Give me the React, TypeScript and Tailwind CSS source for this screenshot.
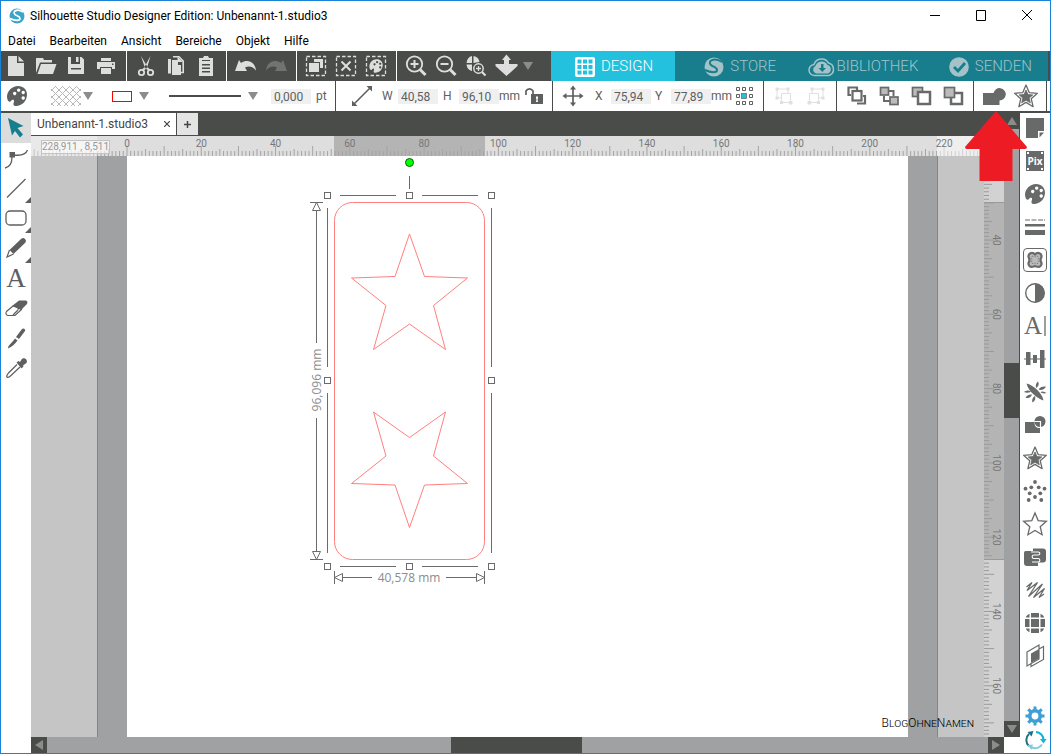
import React, { useState } from 'react'

const PX_PER_MM = 3.714
const PALETTE =
  'M2 13C2 7 7 2 13 2c5.5 0 9 4 9 8.5C22 17 17 22 11 22c-3.5 0-2.5-2.5-2-4.5.5-2.3-2-2.5-3-.5-.8 1.5-3.5 1.5-4-4zM8 9.5a1.7 1.7 0 1 0 0-.1zM12 6.2a1.7 1.7 0 1 0 0-.1zM16.5 8.5a1.7 1.7 0 1 0 0-.1zM16.5 14a1.7 1.7 0 1 0 0-.1z'
const STAR = 'M12 1l3.2 7.6 8.2.7-6.2 5.4 1.9 8L12 18.4 4.9 22.7l1.9-8L.6 9.3l8.2-.7z'
const STAR_SMALL = 'M12 6l2 4.5 4.8.4-3.6 3.2 1.1 4.7L12 16.3l-4.3 2.5 1.1-4.7-3.6-3.2 4.8-.4z'

function Icon({ children, className = '' }: { children: React.ReactNode; className?: string }) {
  return (
    <svg viewBox="0 0 24 24" className={`h-6 w-6 shrink-0 overflow-visible ${className}`} fill="currentColor" aria-hidden="true">
      {children}
    </svg>
  )
}

function Stroke({ d, w = 1.5 }: { d: string; w?: number }) {
  return <path d={d} fill="none" stroke="currentColor" strokeWidth={w} />
}

const dashedBox = <rect x="2.5" y="2.5" width="19" height="19" fill="none" stroke="currentColor" strokeWidth="1.3" strokeDasharray="3.5 2" />

const mainGroups: { label: string; icon: React.ReactNode; dim?: boolean }[][] = [
  [
    { label: 'Neu', icon: <path d="M4 2h9v7h7v13H4zM14.5 2L20 7.5h-5.5z" /> },
    { label: 'Öffnen', icon: <path d="M2 19V4h7l1 2h8v2.5H6zM7 10h15.5L19 20H3.5z" /> },
    { label: 'Speichern', icon: <path fillRule="evenodd" d="M4 3h3v7h9V3h1.5L20 5.5V20H4zM7 14h10v1.5H7zM12 3h2.5v5H12z" /> },
    { label: 'Drucken', icon: <path fillRule="evenodd" d="M7 4h10v3H7zM3 8h18v7h-3v-2H6v2H3zM7 14h10v6H7zM18 9.5h1.5V11H18z" /> },
  ],
  [
    {
      label: 'Ausschneiden',
      icon: (
        <>
          <path d="M7 2l6.5 11-2 2.5zM16.5 2l-6 11 2 2.5z" />
          <Stroke d="M11 14l-2.5 2.5M13 14l2.5 2.5" w={2} />
          <circle cx="7.5" cy="18.5" r="2.7" fill="none" stroke="currentColor" strokeWidth="1.8" />
          <circle cx="16.5" cy="18.5" r="2.7" fill="none" stroke="currentColor" strokeWidth="1.8" />
        </>
      ),
    },
    {
      label: 'Kopieren',
      icon: (
        <>
          <path d="M4 5h3v14.5H4zM8 6h6v5h3v10H8z" />
          <path fill="#4a4c4a" d="M7 5h1v14.5H7z" />
          <Stroke d="M9 2.8h6L19.2 7v11.5H17" w={1.6} />
          <path d="M13.5 2.5L19 8h-5.5z" />
        </>
      ),
    },
    { label: 'Einfügen', icon: <path fillRule="evenodd" d="M5 4h4l1-2h4l1 2h4v18H5zM8 6v1h8V6zM8 10v1.5h8V10zM8 13.5V15h8v-1.5zM8 17v1.5h8V17z" /> },
  ],
  [
    { label: 'Rückgängig', icon: <path d="M1 17L5 6l2 3c7-4.5 14-1 15 7.5-3-4-7-5-11-3l2 3.5z" /> },
    { label: 'Wiederholen', dim: true, icon: <path d="M23 17L19 6l-2 3C10 4.5 3 8 2 16.5c3-4 7-5 11-3L11 17z" /> },
  ],
  [
    {
      label: 'Alles auswählen',
      icon: (
        <>
          {dashedBox}
          <path d="M10 5h9v9h-3V8h-6zM5 9h10v9H5z" />
        </>
      ),
    },
    {
      label: 'Auswahl aufheben',
      icon: (
        <>
          {dashedBox}
          <Stroke d="M7.5 7.5l9 9M16.5 7.5l-9 9" w={2} />
        </>
      ),
    },
    {
      label: 'Nach Farbe auswählen',
      icon: (
        <>
          {dashedBox}
          <path fillRule="evenodd" transform="translate(4 4) scale(.67)" d={PALETTE} />
        </>
      ),
    },
  ],
  [
    {
      label: 'Vergrößern',
      icon: (
        <>
          <circle cx="10.5" cy="10" r="7.7" fill="none" stroke="currentColor" strokeWidth="1.8" />
          <Stroke d="M6.5 10h8M10.5 6v8" w={2} />
          <Stroke d="M16 15.5l5.5 5.5" w={3} />
        </>
      ),
    },
    {
      label: 'Verkleinern',
      icon: (
        <>
          <circle cx="10.5" cy="10" r="7.7" fill="none" stroke="currentColor" strokeWidth="1.8" />
          <Stroke d="M6.5 10h8" w={2} />
          <Stroke d="M16 15.5l5.5 5.5" w={3} />
        </>
      ),
    },
    {
      label: 'Auswahl zoomen',
      icon: (
        <>
          <path d="M8 2v7H2.5C3 5 5 2.5 8 2zM9.5 2c3.5.5 5.5 3 6 6l-6 1zM2.5 10.5H8V17c-3-.5-5-2.5-5.5-6.5z" />
          <circle cx="14.5" cy="14.5" r="4.7" fill="none" stroke="currentColor" strokeWidth="1.5" />
          <Stroke d="M12 14.5h5M14.5 12v5" w={1.3} />
          <Stroke d="M18 18l3.5 3.5" w={2.2} />
        </>
      ),
    },
    { label: 'Verschieben', icon: <path d="M12.5.5L17 6h-2v4h8.500v2L12.5 22 1.500 12v-2H10V6H8z" /> },
  ],
]

const tabs = [
  {
    name: 'DESIGN',
    pad: 'pl-6 gap-1.5',
    icon: (
      <svg viewBox="0 0 20 20" className="h-5 w-5">
        <rect width="20" height="20" rx="2" fill="#fff" />
        <path fill="#24c1df" d="M2.5 2.5h4v4h-4zM8 2.5h4v4H8zM13.5 2.5h4v4h-4zM2.5 8h4v4h-4zM8 8h4v4H8zM13.5 8h4v4h-4zM2.5 13.5h4v4h-4zM8 13.5h4v4H8zM13.5 13.5h4v4h-4z" />
      </svg>
    ),
  },
  {
    name: 'STORE',
    pad: 'pl-[29px] gap-1.5',
    icon: (
      <svg viewBox="0 0 20 20" className="h-5 w-5">
        <circle cx="10" cy="10" r="9.5" fill="#a3c3c8" />
        <path d="M18 5C10 0 3 4 7 8c2 2 6 2 6 5 0 3-6 3-12 0" fill="none" stroke="#187e8d" strokeWidth="2" />
      </svg>
    ),
  },
  {
    name: 'BIBLIOTHEK',
    pad: 'pl-2 gap-px',
    icon: (
      <svg viewBox="0 0 28 20" className="h-5 w-7">
        <path d="M7 18.5a5.5 5.5 0 0 1-1-11A8 8 0 0 1 20.5 6 6.5 6.5 0 0 1 21 18.5z" fill="#187e8d" stroke="#a3c3c8" strokeWidth="1.5" />
        <path d="M8 16.5a4 4 0 0 1-.5-7.5A6.5 6.5 0 0 1 19.5 8a4.5 4.5 0 0 1 .5 8.5z" fill="#a3c3c8" />
        <path d="M13 7h2.5v4H18l-3.7 4-3.8-4H13z" fill="#187e8d" />
      </svg>
    ),
  },
  {
    name: 'SENDEN',
    pad: 'pl-[25px] gap-1.5',
    icon: (
      <svg viewBox="0 0 20 20" className="h-5 w-5">
        <circle cx="10" cy="10" r="9.8" fill="#a3c3c8" />
        <path d="M5 10l4 4 7-8" fill="none" stroke="#187e8d" strokeWidth="2.8" />
      </svg>
    ),
  },
]

const groupIcon = (
  <Icon className="text-[#e0e0e0]">
    <Stroke d="M5 5h11v4M5 5v9h4M9.5 9.5h9v9h-9z" w={1} />
    <path d="M3.5 3.5h3v3h-3zM14.5 3.5h3v3h-3zM3.5 12.5h3v3h-3zM17 17h3.5v3.5H17zM8 17h3v3H8z" />
  </Icon>
)

const arrangeIcons = [
  {
    label: 'Nach vorne bringen',
    icon: (
      <>
        <Stroke d="M12 6V3.5H3.5V11H6M12 19.5h8V12h-2" w={2.2} />
        <rect x="7.5" y="7" width="9" height="9.5" fill="#fff" stroke="currentColor" strokeWidth="2.2" />
      </>
    ),
  },
  {
    label: 'Nach hinten stellen',
    icon: (
      <>
        <Stroke d="M7 12v5h6M12 7h4.5v5" w={2} />
        <rect x="3.5" y="3.5" width="8" height="7.5" fill="#bbb" stroke="currentColor" strokeWidth="1.7" />
        <rect x="13" y="13" width="8" height="7.5" fill="#bbb" stroke="currentColor" strokeWidth="1.7" />
      </>
    ),
  },
  {
    label: 'Einen Schritt nach vorne',
    icon: (
      <>
        <rect x="3.5" y="3.5" width="10" height="9" fill="#bbb" stroke="currentColor" strokeWidth="1.7" />
        <rect x="9" y="8" width="12" height="12" fill="#fff" stroke="currentColor" strokeWidth="2.5" />
      </>
    ),
  },
  {
    label: 'Einen Schritt nach hinten',
    icon: (
      <>
        <rect x="10" y="9" width="11" height="11" fill="#fff" stroke="currentColor" strokeWidth="2.5" />
        <rect x="3.5" y="3.5" width="10" height="10" fill="#bbb" stroke="currentColor" strokeWidth="1.7" />
      </>
    ),
  },
]

const tools: { label: string; flyout?: boolean; icon: React.ReactNode }[] = [
  { label: 'Auswählen', icon: <path fill="#177e8d" d="M4 2l15.5 8-6 2 5.5 6.5-3 3-5-6.5-3 4.5z" /> },
  {
    label: 'Punkte bearbeiten',
    icon: (
      <>
        <path d="M5.5 6H11v5.5H5.5z" />
        <Stroke d="M10 9c8 1 12-1 13.5-5M8 11c0 6-2 10-7 11" w={1.3} />
      </>
    ),
  },
  { label: 'Linie', flyout: true, icon: <Stroke d="M3 21.5L21.5 3" w={1.3} /> },
  { label: 'Rechteck', flyout: true, icon: <rect x="2" y="5" width="20" height="14" rx="4" fill="none" stroke="currentColor" strokeWidth="1.3" /> },
  {
    label: 'Freihand',
    flyout: true,
    icon: (
      <>
        <path d="M5.5 14L17 3c1.5-1.5 3-1.500 4 0 1 1 1.500 2.500 0 4L9.500 18z" />
        <Stroke d="M5.5 14L3 21l6.500-3" w={1.2} />
      </>
    ),
  },
  { label: 'Text', icon: <text x="12" y="21" textAnchor="middle" fontSize="27" fontFamily="Liberation Serif, serif">A</text> },
  {
    label: 'Radierer',
    icon: (
      <>
        <path d="M8 10l7-5.500h6c2.500 0 3 2 1.500 4L17 14z" />
        <Stroke d="M9 10l-6.5 5.5c-1.5 2 0 4 2 4H11L18 13M8.5 10h3c3 0 4 2 2 4.5L9 19" w={1.2} />
      </>
    ),
  },
  { label: 'Messer', icon: <path d="M12 11l6-8c1-1.5 4 0 3 2l-6 8zM11 12.5l2.5 2C11 18 8 21 4 22.5 4 19 8 17 11 12.5z" /> },
  {
    label: 'Pipette',
    icon: (
      <>
        <path d="M12.5 6.5l2-1.5 1.5 1 1.5-2.5c2-3 7 0 5 3.5L19 9.5l.5 1-2 2z" />
        <Stroke d="M13 8.5L4.5 17c-1 1.5-2.5 3-1.5 4s3-.5 4-1.5l9-8.5" w={1.2} />
      </>
    ),
  },
]

const dots = [[12, 3], [8.3, 8.3], [15.7, 8.3], [2.5, 9.7], [21.5, 9.7], [6.7, 14.3], [17.3, 14.3], [12, 18], [5.7, 21], [18.3, 21]]

const panels: { label: string; active?: boolean; icon: React.ReactNode }[] = [
  { label: 'Seite einrichten', icon: <path d="M3 2h18v13h-6v7H3zM16.5 16.5H21l-4.500 5z" /> },
  {
    label: 'PixScan',
    icon: (
      <>
        <rect x="3" y="2" width="18" height="20" />
        <path fill="#fff" d="M4 3h2v2H4zM18 3h2v2h-2zM4 19h2v2H4zM18 19h2v2h-2z" />
        <text x="12" y="16" textAnchor="middle" fontSize="10" fontWeight="700" fill="#fff" fontFamily="Open Sans, sans-serif">Pix</text>
      </>
    ),
  },
  { label: 'Füllung', icon: <path fillRule="evenodd" d={PALETTE} /> },
  {
    label: 'Linienstil',
    icon: <path d="M2 4.5h5v1H2zM8.5 4.5h5v1h-5zM15 4.5h5v1h-5zM21 4.5h1v1h-1zM2 9h20v2.5H2zM2 15h20v5H2z" />,
  },
  {
    label: 'Nachzeichnen',
    active: true,
    icon: (
      <>
        <path d="M6 3c2.5-1 4.5 0 6 1.5C13.5 3 15.5 2 18 3c3 1.500 3.5 4.5 1.500 7.5v3c2 3 1.5 6-1.500 7.5-2.5.5-4.500-.5-6-1-1.500.5-3.500 1.500-6 1-3-1.500-3.500-4.500-1.500-7.500v-3C2.500 7.500 3 4.500 6 3z" fill="#bbb" stroke="currentColor" strokeWidth="3" />
        <path d="M8 7c2-.5 3 1 4 1s2-1.500 4-1c1.500 1.500 0 3.500 0 5s1.500 3 0 4.500c-2 .5-3-.5-4-.5s-2 1-4 .5c-1.500-1.500 0-3 0-4.500s-1.500-3.500 0-5z" fill="none" stroke="currentColor" strokeDasharray="2 1.5" />
      </>
    ),
  },
  {
    label: 'Kontrast',
    icon: (
      <>
        <circle cx="12" cy="12" r="9.3" fill="none" stroke="currentColor" strokeWidth="1.4" />
        <path d="M12 2.5a9.5 9.5 0 0 1 0 19z" />
      </>
    ),
  },
  {
    label: 'Textstil',
    icon: (
      <>
        <text x="10" y="20" textAnchor="middle" fontSize="25" fontFamily="Liberation Serif, serif">A</text>
        <Stroke d="M22 2v20" w={1.3} />
      </>
    ),
  },
  { label: 'Ausrichten', icon: <path d="M1 11.5h22v1H1zM3 5h4.5v13H3zM10 8h4v8h-4zM17 3h4.5v18H17z" /> },
  {
    label: 'Replizieren',
    icon: (
      <>
        <path d="M3.5 3.5C10 5 19.5 13 20.500 20.500 14 18.500 5 11 3.500 3.500z" />
        <path d="M13 8c-.5-3 0-5 2-6.500 1.500 2.500.5 5-2 6.500zM15.500 9.500c1.500-2.500 4-3.500 7.500-3-1.500 3-4 4-7.500 3zM17.500 12c2-1 4-.5 6 1-2.500.8-4.500.5-6-1zM1 12c2.500-2 5-2 7-.5-2 1.500-4.500 1.800-7 .5zM2.500 18c1-2.500 3.500-4 6.500-3.500-1 3-3.500 4-6.500 3.500zM9.500 22.500c-1-2.500 0-5 2.500-6.500 1 2.500 0 5-2.500 6.500z" />
      </>
    ),
  },
  {
    label: 'Ändern',
    icon: (
      <>
        <circle cx="17" cy="8.5" r="5.5" />
        <path d="M2 9h9.500c0 4 1.500 6 5.500 6v5H2z" />
        <path d="M11.5 8.5h6V15" fill="none" stroke="#fff" strokeWidth="1.2" />
      </>
    ),
  },
  {
    label: 'Versatz',
    icon: (
      <>
        <path d={STAR} fill="none" stroke="currentColor" strokeWidth="1.3" strokeLinejoin="round" />
        <path d={STAR_SMALL} stroke="currentColor" strokeWidth=".8" />
      </>
    ),
  },
  { label: 'Strasssteine', icon: dots.map(([cx, cy]) => <circle key={`${cx}-${cy}`} cx={cx} cy={cy} r="1.9" />) },
  { label: 'Skizze', icon: <path d={STAR} fill="none" stroke="currentColor" strokeWidth="1.3" /> },
  {
    label: 'Puzzle',
    icon: (
      <>
        <path d="M3 6h7V3.5h10c2 0 3 1 3 3v8c0 2-1 3-3 3h-5V21H4c-2 0-3-1-3-3V9c0-2 0-3 2-3z" />
        <path d="M8 7h7c2.5 0 2.5 3 0 3h-4c-2.5 0-2.5 3.5 0 3.5h4c2.500 0 2.500 3.500 0 3.500H9" fill="none" stroke="#fff" strokeWidth="1.1" />
      </>
    ),
  },
  { label: 'Füllmuster', icon: <Stroke d="M3.500 9L9 4.500 4 12.500 14.500 4.500 5.500 18.500 19.500 6 10.500 19.500 21.500 10.500 16 19.500 21 16" w={1.3} /> },
  {
    label: 'Medienanordnung',
    icon: (
      <path d="M8 2h8v4.5H8zM8 17.5h8V22H8zM2 8h4.5v8H2zM17.5 8H22v8h-4.5zM8 8h8v8H8zM6.5 2.8v3.7H2.8c.5-1.5 2-3 3.7-3.7zM17.5 2.8v3.7h3.7c-.5-1.5-2-3-3.7-3.7zM6.5 21.2v-3.7H2.8c.5 1.5 2 3 3.7 3.7zM17.5 21.2v-3.7h3.7c-.5 1.5-2 3-3.7 3.7z" />
    ),
  },
  {
    label: 'Warp',
    icon: (
      <>
        <path d="M8 9.500L16 5v9.500L8 19z" />
        <Stroke d="M4 8L16 1v14L4 22zM16 5l4.500-2.500v13L8 22.500V19" w={1.2} />
      </>
    ),
  },
]

function Separator() {
  return <span className="h-full w-px shrink-0 bg-[#4a4c4a]" />
}

function Caret({ className = '' }: { className?: string }) {
  return (
    <svg viewBox="0 0 10 8" className={`h-2 w-2.5 shrink-0 ${className}`} fill="#8b8d8b" aria-hidden="true">
      <path d="M0 0h10L5 8z" />
    </svg>
  )
}

function Measure({ id, label, value }: { id: string; label: string; value: string }) {
  return (
    <>
      <label htmlFor={id} className="w-4 shrink-0">{label}</label>
      <input id={id} defaultValue={value} className="mt-px h-[15px] w-10 shrink-0 bg-[#f0f0f0] pl-[3px] outline-none" />
    </>
  )
}

function TopRuler() {
  const ticks = Array.from({ length: 300 }, (_, i) => i - 25)
  return (
    <svg className="h-5 w-full bg-[#dedede]" aria-hidden="true">
      <rect x="303" width="151" height="20" fill="#b4b4b4" />
      {ticks.map(mm => {
        const x = 96 + mm * PX_PER_MM
        const len = mm % 10 === 0 ? 10 : mm % 5 === 0 ? 7 : 5
        return <path key={mm} d={`M${x} 20v-${len}`} stroke="#a4a4a4" />
      })}
      <rect width="66" height="20" fill="#fff" opacity=".35" />
      <rect x="906" width="100%" height="20" fill="#fff" opacity=".5" />
      {ticks.filter(mm => mm % 20 === 0 && mm >= 0 && mm < 230).map(mm => (
        <text key={mm} x={96 + mm * PX_PER_MM} y="11" textAnchor="middle" fontSize="10" fill="#777">{mm}</text>
      ))}
    </svg>
  )
}

function SideRuler() {
  const ticks = Array.from({ length: 300 }, (_, i) => i + 18)
  return (
    <svg className="h-full w-5 shrink-0 bg-[#d2d2d2]" aria-hidden="true">
      <rect y="46" width="20" height="357" fill="#b4b4b4" />
      <path d="M0 46.5h20M0 403.5h20" stroke="#9a9a9a" />
      {ticks.map(mm => {
        const y = mm * PX_PER_MM - 64.5
        const len = mm % 10 === 0 ? 10 : mm % 5 === 0 ? 8 : 5
        return <path key={mm} d={`M0 ${y}h${len}`} stroke="#9a9a9a" />
      })}
      {ticks.filter(mm => mm % 20 === 0 && mm > 20 && mm < 170).map(mm => (
        <text key={mm} transform={`translate(9 ${mm * PX_PER_MM - 64.5}) rotate(90)`} textAnchor="middle" fontSize="10" fill="#777">{mm}</text>
      ))}
    </svg>
  )
}

function Artwork() {
  const star = 'M378.5 78L393.5 120.5 436.5 122 402.5 149.5 414.5 193.5 378.5 168 342.5 193.5 355 149.5 320.5 122 364 120.5z'
  return (
    <svg className="absolute inset-0 h-full w-full" fill="none" aria-label="Zeichenfläche">
      <g stroke="#ff7f7f">
        <rect x="303.5" y="46.5" width="150" height="357" rx="18" />
        <path d={star} />
        <path d={star} transform="translate(0 449.5) scale(1 -1)" />
      </g>
      <g stroke="#6b6b6b">
        <path d="M378.5 20v13M309 39.5h56M391 39.5h56M309 410.5h56M391 410.5h56" />
        <path d="M296.5 52v159M296.5 237v160M460.5 52v159M460.5 237v160" />
        {[296, 378, 460].flatMap(x => [39, 224, 410].map(y => (x === 378 && y === 224 ? null : <rect key={`${x}-${y}`} x={x - 2.5} y={y - 2.5} width="6" height="6" fill="#fff" />)))}
        <path d="M279 46.5h13M279 403.5h13M285.5 54v133M285.5 262v134M281.5 54.5l4-8 4 8zM281.5 395.5l4 8 4-8z" />
        <path d="M303.5 415v13M453.5 415v13M311 421.5h30M415 421.5h31M311.5 417.5l-8 4 8 4zM445.5 417.5l8 4-8 4z" />
      </g>
      <circle cx="378.5" cy="6.5" r="4" fill="#0f0" stroke="#060" />
      <g fill="#8c8c8c" fontSize="12" textAnchor="middle" className="font-['Open_Sans','Noto_Sans',sans-serif]">
        <text x="378" y="426">40,578 mm</text>
        <text transform="translate(290 224) rotate(-90)">96,096 mm</text>
      </g>
    </svg>
  )
}

export default function App() {
  const [activeTab, setActiveTab] = useState('DESIGN')
  const [activeTool, setActiveTool] = useState('Auswählen')

  return (
    <div className="relative flex h-screen min-h-0 flex-col overflow-hidden border border-[#1883d7] bg-white font-['Roboto','Noto_Sans',sans-serif] text-xs text-black">
      {/* Title bar */}
      <header className="flex h-[30px] shrink-0 items-center pl-2">
        <svg viewBox="0 0 16 16" className="mr-[5px] h-4 w-4" aria-hidden="true">
          <circle cx="8" cy="8" r="7.5" fill="#3aa5c9" />
          <path d="M14 4C8 0 3 3.5 6 6.5c1.5 1.5 5 1.5 5 4s-5 2.5-10 0" fill="none" stroke="#fff" strokeWidth="1.7" />
        </svg>
        <h1>Silhouette Studio Designer Edition: Unbenannt-1.studio3</h1>
        <div className="ml-auto flex">
          {[
            { label: 'Minimieren', d: 'M1 5.5h10' },
            { label: 'Maximieren', d: 'M1.5.5h9v10h-9z' },
            { label: 'Schließen', d: 'M1 0l10 10M11 0L1 10' },
          ].map(b => (
            <button key={b.label} aria-label={b.label} className="flex h-[30px] w-[46px] items-center justify-center">
              <svg viewBox="0 0 12 12" className="h-3 w-3" fill="none" stroke="#000"><path d={b.d} /></svg>
            </button>
          ))}
        </div>
      </header>

      <nav className="flex h-5 shrink-0 items-center gap-3.5 pl-[7px]">
        {['Datei', 'Bearbeiten', 'Ansicht', 'Bereiche', 'Objekt', 'Hilfe'].map(m => (
          <button key={m}>{m}</button>
        ))}
      </nav>

      {/* Main toolbar */}
      <div className="flex h-[30px] shrink-0 bg-[#4a4c4a] pr-0.5 text-[#dedede]">
        {mainGroups.map((group, i) => (
          <div key={i} className={`flex shrink-0 ${i === 0 ? 'pr-[5px]' : i === 4 ? 'border-l border-white pl-1' : 'border-l border-white pl-1 pr-[5px]'}`}>
            {group.map(b => (
              <button key={b.label} aria-label={b.label} disabled={b.dim} className={`flex h-[30px] w-[30px] items-center justify-center ${b.dim ? 'text-[#717371]' : ''}`}>
                <Icon>{b.icon}</Icon>
              </button>
            ))}
            {i === 4 && <button aria-label="Weitere Ansichten" className="w-[30px] pl-0.5"><Caret /></button>}
          </div>
        ))}
        <div className="grid min-w-0 flex-1 grid-cols-4">
          {tabs.map(tab => (
            <button
              key={tab.name}
              onClick={() => setActiveTab(tab.name)}
              className={`flex min-w-0 items-center pt-0.5 text-[15px] font-light ${tab.pad} ${activeTab === tab.name ? 'bg-[#24c1df] text-white' : 'bg-[#187e8d] text-[#a3c3c8]'}`}
            >
              <span className="shrink-0">{tab.icon}</span>
              {tab.name}
            </button>
          ))}
        </div>
      </div>

      {/* Property toolbar */}
      <div className="flex h-[30px] shrink-0 items-center text-[#5e6060]">
        <div className="flex h-full w-[334px] shrink-0 items-center pl-1">
          <button aria-label="Farben"><Icon><path fillRule="evenodd" d={PALETTE} /></Icon></button>
          <button aria-label="Füllfarbe" className="ml-[22px] flex items-center gap-0.5">
            <svg viewBox="0 0 30 20" className="h-5 w-[30px]" fill="none" stroke="#b8b8b8">
              <path d="M0 5l5-5M0 12L12 0M0 19L19 0M6 20L26 0M13 20L30 3M20 20l10-10M27 20l3-3M25 0l5 5M18 0l12 12M11 0l19 19M4 0l20 20M0 3l17 17M0 10l10 10M0 17l3 3" />
            </svg>
            <Caret />
          </button>
          <button aria-label="Linienfarbe" className="ml-[19px] flex items-center gap-[7px]">
            <span className="h-[11px] w-5 border border-[#f00]" />
            <Caret />
          </button>
          <button aria-label="Linienart" className="ml-5 flex items-center gap-[7px]">
            <span className="h-0.5 w-[72px] bg-[#4a4c4a]" />
            <Caret />
          </button>
          <input aria-label="Linienstärke" defaultValue="0,000" className="ml-[13px] mt-px h-[15px] w-10 bg-[#f0f0f0] pl-[3px] outline-none" />
          <span className="ml-[5px]">pt</span>
        </div>
        <Separator />
        <div className="flex h-full w-[216px] shrink-0 items-center pl-3.5">
          <Icon className="mr-2"><Stroke d="M4 20L20 4" w={1.6} /><path d="M22 2v5.5L16.5 2zM2 22v-5.5L7.5 22z" /></Icon>
          <Measure id="width" label="W" value="40,58" />
          <span className="w-[5px]" />
          <Measure id="height" label="H" value="96,10" />
          <span className="w-6">mm</span>
          <button aria-label="Seitenverhältnis sperren">
            <Icon>
              <Stroke d="M3 11V7a4 4 0 0 1 7 0v3" w={1.7} />
              <path fillRule="evenodd" d="M8 10h12v10H8zM13 12.5v2l.5.5-.5 3h2l-.5-3 .5-.5v-2z" />
            </Icon>
          </button>
        </div>
        <Separator />
        <div className="flex h-full w-[210px] shrink-0 items-center pl-2">
          <Icon className="mr-2.5"><Stroke d="M12 4v16M4 12h16" w={1.7} /><path d="M12 1.5l3 4H9zM12 22.5l3-4H9zM1.5 12l4-3v6zM22.5 12l-4-3v6z" /></Icon>
          <Measure id="pos-x" label="X" value="75,94" />
          <span className="w-1" />
          <Measure id="pos-y" label="Y" value="77,89" />
          <span className="w-[21px]">mm</span>
          <button aria-label="Bezugspunkt">
            <Icon>
              <path d="M4.5 3.5h3v3h-3zM10.5 3.5h3v3h-3zM17.5 3.5h3v3h-3zM4.5 10.5h3v3h-3zM17.5 10.5h3v3h-3zM4.5 17.5h3v3h-3zM10.5 17.5h3v3h-3zM17.5 17.5h3v3h-3z" fill="none" stroke="currentColor" />
              <rect x="9.5" y="9.5" width="5" height="5" fill="#24c1df" stroke="currentColor" strokeWidth=".7" />
            </Icon>
          </button>
        </div>
        <Separator />
        <div className="flex h-full w-[72px] shrink-0 items-center gap-2 pl-2">
          <button aria-label="Gruppieren" disabled>{groupIcon}</button>
          <button aria-label="Gruppierung aufheben" disabled className="-scale-x-100">{groupIcon}</button>
        </div>
        <Separator />
        <div className="flex h-full w-[136px] shrink-0 items-center gap-2 pl-2 text-[#686a6a]">
          {arrangeIcons.map(b => (
            <button key={b.label} aria-label={b.label}><Icon>{b.icon}</Icon></button>
          ))}
        </div>
        <Separator />
        <div className="flex h-full w-[72px] shrink-0 items-center gap-2 pl-2 text-[#686a6a]">
          <button aria-label="Verschweißen"><Icon><path d="M1 9h10.5a6.2 6.2 0 1 1 6 7.5V21H1z" /></Icon></button>
          <button aria-label="Versatz">
            <Icon>
              <path d={STAR} fill="none" stroke="currentColor" strokeWidth="1.3" strokeLinejoin="round" />
              <path d={STAR_SMALL} stroke="currentColor" strokeWidth=".8" />
            </Icon>
          </button>
        </div>
        <Separator />
      </div>
      <div className="h-0.5 shrink-0 bg-[#4a4c4a]" />

      <main className="flex min-h-0 flex-1">
        {/* Drawing tools */}
        <aside className="flex w-[30px] shrink-0 flex-col text-[#5e6060]">
          {tools.map(t => (
            <button
              key={t.label}
              aria-label={t.label}
              onClick={() => setActiveTool(t.label)}
              className={`relative flex h-[30px] items-center justify-center ${activeTool === t.label ? 'bg-[#dcdcdc]' : ''}`}
            >
              <Icon>{t.icon}</Icon>
              {t.flyout && (
                <svg viewBox="0 0 6 6" className="absolute bottom-0 right-0 h-1.5 w-1.5" fill="currentColor"><path d="M6 0v6H0z" /></svg>
              )}
            </button>
          ))}
        </aside>

        {/* Document */}
        <section className="flex min-w-0 flex-1 flex-col">
          <div className="flex min-h-0 flex-1">
            <div className="flex min-w-0 flex-1 flex-col">
              <div className="flex h-[23px] shrink-0 gap-px bg-[#4a4c4a] pb-px text-[#444]">
                <div className="flex w-[145px] items-center justify-between bg-white px-1.5">
                  <span>Unbenannt-1.studio3</span>
                  <button aria-label="Tab schließen">
                    <svg viewBox="0 0 6 6" className="h-1.5 w-1.5" stroke="#444" strokeWidth="1.2"><path d="M0 0l6 6M6 0L0 6" /></svg>
                  </button>
                </div>
                <button aria-label="Neuer Tab" className="flex w-[21px] items-center justify-center bg-[#e4e4e4]">
                  <svg viewBox="0 0 7 7" className="h-[7px] w-[7px]" stroke="#444" strokeWidth="1.5"><path d="M0 3.5h7M3.5 0v7" /></svg>
                </button>
              </div>
              <div className="relative h-5 shrink-0">
                <TopRuler />
                <div className="absolute left-2.5 top-1 flex h-3.5 w-[69px] items-center justify-center whitespace-nowrap border border-[#c4c4c4] bg-white/60 text-[10px] text-[#999]">
                  228,911 , 8,511
                </div>
              </div>
              <div className="flex min-h-0 flex-1">
                <div className="relative flex min-w-0 flex-1 bg-[#c5c5c5]">
                  <div className="w-[66px] shrink-0" />
                  <div className="min-w-0 flex-1 border-x border-[#848587] bg-[#9fa1a3] px-[29px]">
                    <div className="h-full bg-white" />
                  </div>
                  <div className="w-[46px] shrink-0" />
                  <Artwork />
                  <span className="absolute bottom-1.5 right-2.5 text-xs font-light text-black [font-variant:small-caps]">BlogOhneNamen</span>
                </div>
                <SideRuler />
              </div>
            </div>

            {/* Vertical scrollbar */}
            <div className="flex w-4 shrink-0 flex-col border-r border-[#4a4c4a] bg-[#9fa1a3]">
              <button aria-label="Nach oben" className="flex h-4 items-center justify-center bg-[#4a4c4a]"><Caret className="rotate-180" /></button>
              <div className="h-[234px] shrink-0" />
              <div className="h-[55px] shrink-0 bg-[#4a4c4a]" />
              <button aria-label="Nach unten" className="mt-auto flex h-4 items-center justify-center bg-[#4a4c4a]"><Caret /></button>
            </div>
          </div>

          {/* Horizontal scrollbar */}
          <div className="mr-4 flex h-4 shrink-0 bg-[#9fa1a3]">
            <button aria-label="Nach links" className="flex w-4 items-center justify-center bg-[#4a4c4a]"><Caret className="rotate-90" /></button>
            <div className="w-[404px] shrink-0" />
            <div className="w-[131px] shrink-0 bg-[#4a4c4a]" />
            <button aria-label="Nach rechts" className="ml-auto flex w-4 items-center justify-center bg-[#4a4c4a]"><Caret className="-rotate-90" /></button>
          </div>
        </section>

        {/* Panel shortcuts */}
        <aside className="flex w-[30px] shrink-0 flex-col items-center gap-[3px] text-[#686a6a]">
          {panels.map(p => (
            <button key={p.label} aria-label={p.label} className="flex h-[30px] w-[30px] items-center justify-center">
              {p.active ? (
                <span className="flex h-6 w-6 items-center justify-center rounded border border-[#686a6a]">
                  <svg viewBox="0 0 24 24" className="h-[18px] w-[18px]" fill="currentColor">{p.icon}</svg>
                </span>
              ) : (
                <Icon>{p.icon}</Icon>
              )}
            </button>
          ))}
          <div className="mt-auto flex flex-col pb-px">
            <button aria-label="Einstellungen">
              <Icon className="text-[#3d9fd3]">
                <circle cx="12" cy="12" r="5.2" fill="none" stroke="currentColor" strokeWidth="3.6" />
                <path d="M10.5 2.5h3V6h-3zM10.5 18h3v3.5h-3zM2.5 10.5H6v3H2.5zM18 10.5h3.5v3H18zM4.2 6.3l2.1-2.1L9 6.8 6.8 9zM15 17.2l2.2-2.2 2.6 2.7-2.1 2.1zM17.7 4.2l2.1 2.1L17.2 9 15 6.8zM6.8 15L9 17.2l-2.7 2.6-2.1-2.1z" />
              </Icon>
            </button>
            <button aria-label="Synchronisieren">
              <Icon>
                <path d="M6 18A8 8 0 0 1 6 6" fill="none" stroke="#1e6f82" strokeWidth="2" />
                <path d="M13 4a8 8 0 0 1 7.5 8" fill="none" stroke="#12b3d8" strokeWidth="2" />
                <path d="M19 16.5A8 8 0 0 1 9 19.5" fill="none" stroke="#7fcbe6" strokeWidth="2" />
                <path d="M4.5 4l6-1-2 5.5z" fill="#1e6f82" />
                <path d="M17 11h6.5l-3 4.5z" fill="#12b3d8" />
                <path d="M4.5 17l5.5-.5-1.5 5.5z" fill="#7fcbe6" />
              </Icon>
            </button>
          </div>
        </aside>
      </main>

      {/* Callout arrow */}
      <svg viewBox="0 0 62 70" className="absolute right-[23px] top-[110px] h-[70px] w-[62px]" fill="#ed1c24" aria-hidden="true">
        <path d="M31 0l31 36q0 2-2 2H47.5v32h-33V38H2q-2 0-2-2z" />
      </svg>
    </div>
  )
}
